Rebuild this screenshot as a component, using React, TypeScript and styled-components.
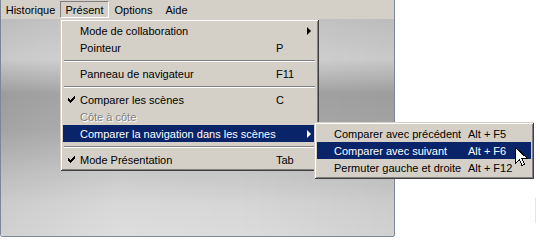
import React from 'react';
import styled, {createGlobalStyle} from 'styled-components';

const GlobalStyle = createGlobalStyle`
  html, body {
    margin: 0;
    padding: 0;
    background: #fff;
  }
  body {
    font-family: Tahoma, "Liberation Sans", Arial, sans-serif;
    font-size: 11px;
  }
`;

const Page = styled.div`
  width: 540px;
  height: 250px;
  position: relative;
  overflow: hidden;
`;

const Window = styled.div`
  width: 393px;
  height: 236px;
  border-left: 1px solid #7b8794;
  border-right: 1px solid #7b8794;
  border-bottom: 1px solid #7b8794;
  border-radius: 0 0 3px 3px;
  display: flex;
  flex-direction: column;
  position: relative;
`;

const MenuBar = styled.div`
  height: 19px;
  background: #d4d0c8;
  display: flex;
  align-items: stretch;
`;

const BarItem = styled.div<{$open?: boolean; $w: number}>`
  position: relative;
  display: flex;
  align-items: center;
  justify-content: center;
  width: ${({$w}) => $w}px;
  color: #000;
  margin-top: 1px;
  height: 17px;
  box-sizing: border-box;
  ${({$open}) =>
    $open &&
    `
    border-top: 1px solid #808080;
    border-left: 1px solid #808080;
    border-bottom: 1px solid #fff;
    border-right: 1px solid #fff;
  `}
`;

const Body = styled.div`
  flex: 1;
  border-radius: 0 0 3px 3px;
  background:
    linear-gradient(90deg, rgba(0, 0, 0, 0.05) 0%, rgba(255, 255, 255, 0.06) 30%, rgba(0, 0, 0, 0) 60%, rgba(0, 0, 0, 0.05) 100%),
    linear-gradient(
      180deg,
      #c6c6c6 0px,
      #d3d3d3 40px,
      #b9b9b9 60px,
      #a4a4a4 75px,
      #acacac 110px,
      #c4c4c4 150px,
      #d6d6d6 185px,
      #dcdcdc 217px
    );
`;

const Menu = styled.div<{$left: number; $top: number; $width: number}>`
  position: absolute;
  left: ${({$left}) => $left}px;
  top: ${({$top}) => $top}px;
  width: ${({$width}) => $width}px;
  box-sizing: border-box;
  background: #d4d0c8;
  padding: 3px;
  box-shadow:
    inset 1px 1px 0 #d4d0c8,
    inset -1px -1px 0 #404040,
    inset 2px 2px 0 #fff,
    inset -2px -2px 0 #808080;
  z-index: 2;
`;

const Item = styled.div<{$active?: boolean; $disabled?: boolean; $cols: string}>`
  position: relative;
  height: 17px;
  display: grid;
  grid-template-columns: ${({$cols}) => $cols};
  align-items: center;
  background: ${({$active}) => ($active ? '#0a246a' : 'transparent')};
  color: ${({$active, $disabled}) =>
    $active ? '#fff' : $disabled ? '#808080' : '#000'};
  text-shadow: ${({$disabled}) => ($disabled ? '1px 1px 0 #fff' : 'none')};
  white-space: nowrap;
`;

const Check = styled.span`
  display: flex;
  justify-content: center;
`;

const Label = styled.span``;

const Shortcut = styled.span``;

const Arrow = styled.span<{$active?: boolean}>`
  width: 0;
  height: 0;
  border-top: 4px solid transparent;
  border-bottom: 4px solid transparent;
  border-left: 4px solid ${({$active}) => ($active ? '#fff' : '#000')};
  justify-self: start;
`;

const Separator = styled.div`
  height: 9px;
  display: flex;
  align-items: center;
  padding: 0 1px;

  &::before {
    content: '';
    flex: 1;
    height: 0;
    border-top: 1px solid #808080;
    border-bottom: 1px solid #fff;
  }
`;

const SubMenu = styled(Menu)`
  z-index: 3;
`;

const Cursor = styled.svg`
  position: absolute;
  left: 515px;
  top: 147px;
  z-index: 5;
`;

const Glint = styled.div`
  position: absolute;
  left: 535px;
  top: 198px;
  width: 1px;
  height: 25px;
  background: #e6e6e6;
`;

const CheckMark = () => (
  <svg width="7" height="7" viewBox="0 0 7 7">
    <path d="M0 2h1v1h1v1h1V3h1V2h1V1h1V0h1v3H6v1H5v1H4v1H3v1H2V6H1V5H0z" fill="#000" />
  </svg>
);

const mainCols = '17px 196px 1fr 9px';
const subCols = '17px 134px 1fr';

type Entry =
  | {sep: true}
  | {
      sep?: false;
      label: string;
      key?: string;
      checked?: boolean;
      disabled?: boolean;
      active?: boolean;
      sub?: boolean;
    };

const entries: Entry[] = [
  {label: 'Mode de collaboration', sub: true},
  {label: 'Pointeur', key: 'P'},
  {sep: true},
  {label: 'Panneau de navigateur', key: 'F11'},
  {sep: true},
  {label: 'Comparer les scènes', key: 'C', checked: true},
  {label: 'Côte à côte', disabled: true},
  {label: 'Comparer la navigation dans les scènes', sub: true, active: true},
  {sep: true},
  {label: 'Mode Présentation', key: 'Tab', checked: true},
];

const subEntries = [
  {label: 'Comparer avec précédent', key: 'Alt + F5'},
  {label: 'Comparer avec suivant', key: 'Alt + F6', active: true},
  {label: 'Permuter gauche et droite', key: 'Alt + F12'},
];

export default function App() {
  return (
    <Page>
      <GlobalStyle />
      <Window>
        <MenuBar>
          <BarItem $w={59}>Historique</BarItem>
          <BarItem $w={49} $open>Présent</BarItem>
          <BarItem $w={49}>Options</BarItem>
          <BarItem $w={37}>Aide</BarItem>
        </MenuBar>
        <Body />
        <Menu $left={59} $top={19} $width={259}>
          {entries.map((e, i) =>
            e.sep ? (
              <Separator key={i} />
            ) : (
              <Item key={i} $cols={mainCols} $active={e.active} $disabled={e.disabled}>
                <Check>{e.checked && <CheckMark />}</Check>
                <Label>{e.label}</Label>
                <Shortcut>{e.key}</Shortcut>
                {e.sub ? <Arrow $active={e.active} /> : <span />}
                {e.active && (
                  <SubMenu $left={251} $top={-3} $width={220}>
                    {subEntries.map((s, j) => (
                      <Item key={j} $cols={subCols} $active={s.active}>
                        <span />
                        <Label>{s.label}</Label>
                        <Shortcut>{s.key}</Shortcut>
                      </Item>
                    ))}
                  </SubMenu>
                )}
              </Item>
            ),
          )}
        </Menu>
      </Window>
      <Cursor width="13" height="21" viewBox="0 0 13 21">
        <path
          d="M0.5 0.5 V16.5 L4.5 12.5 L7 18.5 L9.5 17.5 L7 11.5 H12.5 Z"
          fill="#fff"
          stroke="#000"
          strokeWidth="1"
          shapeRendering="crispEdges"
        />
      </Cursor>
      <Glint />
    </Page>
  );
}
